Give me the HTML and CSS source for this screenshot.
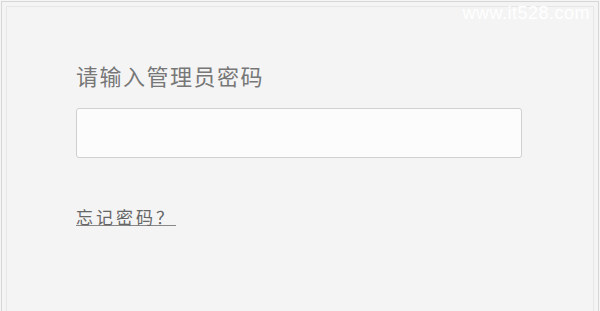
FILE: index.html
```html
<!DOCTYPE html>
<html lang="zh-CN">
<head>
  <meta charset="UTF-8">
  <meta name="viewport" content="width=device-width, initial-scale=1.0">
  <title>管理员登录</title>
  <link rel="stylesheet" href="styles.css">
</head>
<body>

  <div class="login-panel">
    <div class="login-inner">
      <label class="pwd-label" for="pwdInput">请输入管理员密码</label>
      <input type="password" id="pwdInput" class="pwd-input">
      <a href="#" class="forget-link">忘记密码？</a>
    </div>
  </div>

  <div class="watermark">www.it528.com</div>

</body>
</html>
```

FILE: styles.css
```css
html, body {
  height: 100%;
}

body {
  font-family: 'Noto Sans CJK SC', 'Liberation Sans', sans-serif;
  background-color: #f5f5f5;
  margin: 0;
  overflow: hidden;
  position: relative;
}

.login-panel {
  box-sizing: border-box;
  margin: 1px 1px 0 1px;
  height: calc(100% - 1px);
  border: 1px solid #d6d6d6;
  border-bottom: none;
  background-color: #f4f4f4;
  padding: 4px 4px 0 4px;
}

.login-inner {
  box-sizing: border-box;
  height: 100%;
  border: 1px solid #e6e6e6;
  border-bottom: none;
  padding: 53px 0 0 69px;
  display: flex;
  flex-direction: column;
  align-items: flex-start;
}

.pwd-label {
  font-size: 22px;
  letter-spacing: 1.5px;
  line-height: 30px;
  color: #777;
}

.pwd-input {
  box-sizing: border-box;
  margin-top: 18px;
  width: 446px;
  height: 50px;
  border: 1px solid #d0d0d0;
  border-radius: 3px;
  background-color: #fcfcfc;
  outline: none;
}

.forget-link {
  margin-top: 46px;
  font-size: 17px;
  letter-spacing: 3px;
  line-height: 26px;
  color: #666;
  text-decoration: underline;
  text-decoration-color: #888;
}

.watermark {
  position: absolute;
  top: 3px;
  right: 10px;
  font-family: 'Liberation Sans', sans-serif;
  font-size: 18px;
  color: #fff;
  letter-spacing: 0.5px;
}
```
